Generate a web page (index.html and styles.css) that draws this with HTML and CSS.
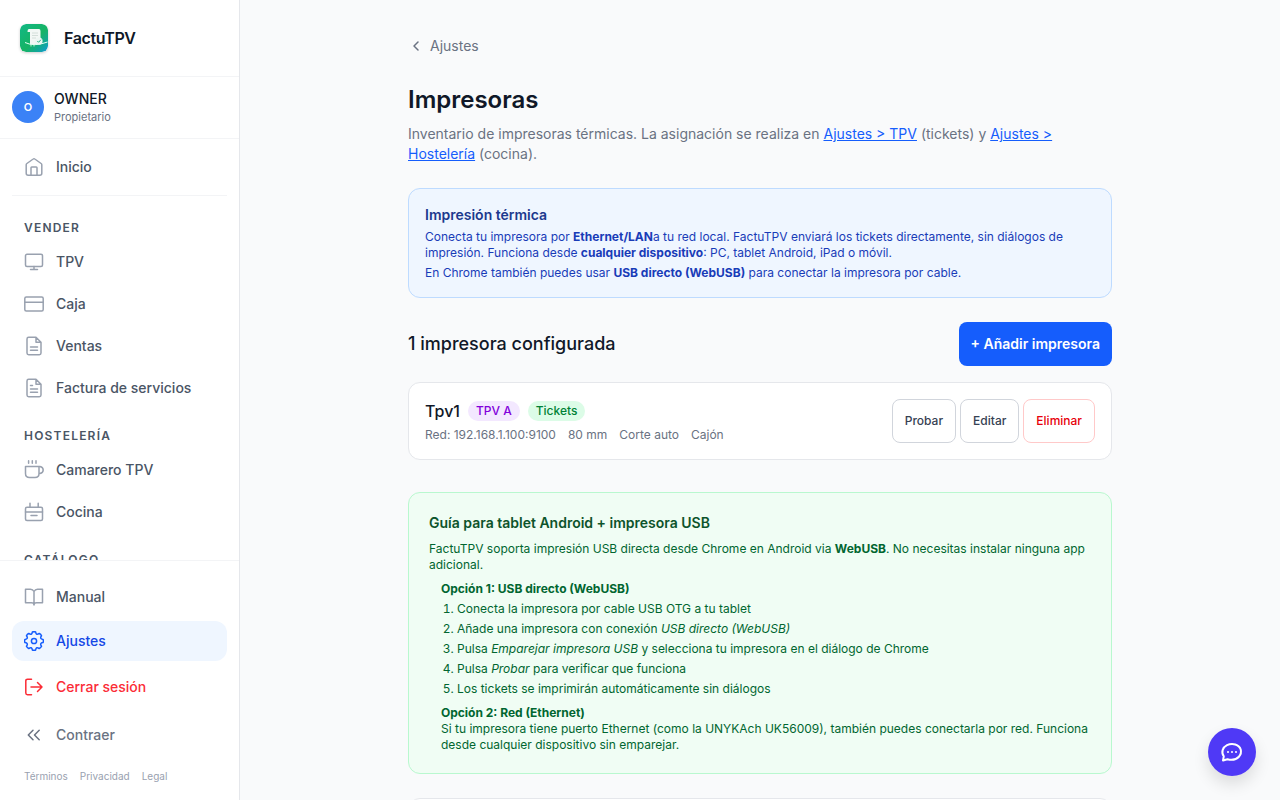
FILE: index.html
```html
<!DOCTYPE html>
<html lang="es">
<head>
  <meta charset="UTF-8">
  <meta name="viewport" content="width=device-width, initial-scale=1.0">
  <title>Impresoras - FactuTPV</title>
  <link rel="stylesheet" href="styles.css">
</head>
<body>
  <!-- Sidebar -->
  <aside class="sidebar">
    <div class="brand">
      <svg class="brand-logo" viewBox="0 0 28 28" aria-hidden="true">
        <defs>
          <linearGradient id="logoBg" x1="0" y1="0" x2="1" y2="1">
            <stop offset="0" stop-color="#12b886"/>
            <stop offset="0.55" stop-color="#16b364"/>
            <stop offset="0.8" stop-color="#12a79a"/>
            <stop offset="1" stop-color="#1199dd"/>
          </linearGradient>
        </defs>
        <rect width="28" height="28" rx="6" fill="url(#logoBg)"/>
        <path d="M9 5h10q1.500 0 1.500 2v13.500H10V8H7.500q0-3 1.500-3z" fill="#f3f7f5"/>
        <path d="M12 9h6M12 11.500h6M12 14h4" stroke="#d3ded9" stroke-width="1"/>
        <path d="M5 18.500q9 4.500 22.500-.5" fill="none" stroke="#e6fff4" stroke-width="1"/>
        <path d="M11 21v1.500M14 21v1.500" stroke="#bff0d8" stroke-width="1"/>
        <circle cx="19" cy="17" r="3.600" fill="#edf5f2"/>
        <path d="M17.300 17l1.300 1.300 2.300-2.600" fill="none" stroke="#27b486" stroke-width="1"/>
      </svg>
      <span class="brand-name">FactuTPV</span>
    </div>

    <div class="user">
      <span class="avatar">O</span>
      <div>
        <div class="user-name">OWNER</div>
        <div class="user-role">Propietario</div>
      </div>
    </div>

    <nav class="nav">
      <a href="#" class="nav-item">
        <svg class="icon" viewBox="0 0 20 20"><path d="M2.200 7.800Q2.200 7 2.900 6.500L9.200 2Q10 1.400 10.800 2L17.100 6.500Q17.800 7 17.800 7.800V16.300Q17.800 18.300 15.800 18.300H4.200Q2.200 18.300 2.200 16.300ZM7 18.300V10.800Q7 10 7.800 10H12.200Q13 10 13 10.800V18.300"/></svg>
        Inicio
      </a>
      <div class="nav-divider"></div>

      <h2 class="nav-label">Vender</h2>
      <a href="#" class="nav-item">
        <svg class="icon" viewBox="0 0 20 20"><rect x="1.500" y="2.300" width="17" height="12.200" rx="1.500"/><path d="M10 14.500V17.500M6.500 17.500h7"/></svg>
        TPV
      </a>
      <a href="#" class="nav-item">
        <svg class="icon" viewBox="0 0 20 20"><rect x="0.800" y="3" width="18.400" height="14" rx="1.500"/><path d="M0.800 8.300h18.400"/></svg>
        Caja
      </a>
      <a href="#" class="nav-item">
        <svg class="icon" viewBox="0 0 20 20"><path d="M12 1.300H4.700Q3 1.300 3 3V17Q3 18.700 4.700 18.700H15.300Q17 18.700 17 17V6.300ZM12 1.300V6.300H17M6.500 11h7M6.500 14.300h7"/></svg>
        Ventas
      </a>
      <a href="#" class="nav-item">
        <svg class="icon" viewBox="0 0 20 20"><path d="M12 1.300H4.700Q3 1.300 3 3V17Q3 18.700 4.700 18.700H15.300Q17 18.700 17 17V6.300ZM12 1.300V6.300H17M6.500 7.500h2M6.500 11h7M6.500 14.300h7"/></svg>
        Factura de servicios
      </a>

      <h2 class="nav-label">Hostelería</h2>
      <a href="#" class="nav-item">
        <svg class="icon" viewBox="0 0 20 20"><path d="M1.500 6.500H15V13.500Q15 17.500 11 17.500H5.500Q1.500 17.500 1.500 13.500ZM15 6.500h1q3.200.6 3.200 3.500t-3.200 3.500h-1M4.600.8v2.500M8.300.8v2.500M12 .8v2.500"/></svg>
        Camarero TPV
      </a>
      <a href="#" class="nav-item">
        <svg class="icon" viewBox="0 0 20 20"><rect x="1.500" y="5.200" width="17" height="13.300" rx="1.500"/><path d="M1.500 10h17M7 13.500h6M6 1.200v4M14.200 1.200v4"/></svg>
        Cocina
      </a>

      <h2 class="nav-label">Catálogo</h2>
    </nav>

    <div class="sidebar-footer">
      <a href="#" class="nav-item">
        <svg class="icon" viewBox="0 0 20 20"><path d="M10 4.500Q8.800 2.300 6.500 2.300H1.500V15.800H7.500Q10 15.800 10 18ZM10 4.500Q11.200 2.300 13.500 2.300H18.500V15.800H12.500Q10 15.800 10 18"/></svg>
        Manual
      </a>
      <a href="#" class="nav-item active">
        <svg class="icon" viewBox="0 0 20 20"><path d="M8.400.95Q10 .3 11.600.95Q12.170 4.750 15.280 2.460Q16.860 3.140 17.540 4.720Q15.250 7.830 19.050 8.400Q19.700 10 19.050 11.600Q15.250 12.170 17.540 15.280Q16.860 16.860 15.280 17.540Q12.170 15.250 11.600 19.050Q10 19.700 8.400 19.050Q7.830 15.250 4.720 17.540Q3.140 16.860 2.460 15.280Q4.750 12.170.95 11.600Q.3 10 .95 8.400Q4.750 7.830 2.460 4.720Q3.140 3.140 4.720 2.460Q7.830 4.750 8.400.95Z"/><circle cx="10" cy="10" r="2.600"/></svg>
        Ajustes
      </a>
      <button type="button" class="nav-item nav-button logout">
        <svg class="icon" viewBox="0 0 20 20"><path d="M7.500 2.200H3.500Q1.800 2.200 1.800 3.900V16.100Q1.800 17.800 3.500 17.800H7.500M7 10H18M13.500 5.500L18 10l-4.500 4.500"/></svg>
        Cerrar sesión
      </button>
      <button type="button" class="nav-item nav-button collapse">
        <svg class="icon" viewBox="0 0 20 20"><path d="M9 5.300L4.300 10 9 14.700M15.200 5.300L10.500 10l4.700 4.700"/></svg>
        Contraer
      </button>
      <div class="legal">
        <a href="#">Términos</a>
        <a href="#">Privacidad</a>
        <a href="#">Legal</a>
      </div>
    </div>
  </aside>

  <!-- Content -->
  <main class="content">
    <div class="page">
      <a href="#" class="back-link">
        <svg class="icon-small" viewBox="0 0 16 16"><path d="M10 4L6 8l4 4"/></svg>
        Ajustes
      </a>

      <h1>Impresoras</h1>
      <p class="intro">Inventario de impresoras térmicas. La asignación se realiza en <a href="#">Ajustes &gt; TPV</a> (tickets) y <a href="#">Ajustes &gt; Hostelería</a> (cocina).</p>

      <section class="info-box">
        <h3>Impresión térmica</h3>
        <p>Conecta tu impresora por <strong>Ethernet/LAN</strong>a tu red local. FactuTPV enviará los tickets directamente, sin diálogos de impresión. Funciona desde <strong>cualquier dispositivo</strong>: PC, tablet Android, iPad o móvil.</p>
        <p>En Chrome también puedes usar <strong>USB directo (WebUSB)</strong> para conectar la impresora por cable.</p>
      </section>

      <div class="list-header">
        <h2>1 impresora configurada</h2>
        <button type="button" class="btn-primary">+ Añadir impresora</button>
      </div>

      <article class="card printer">
        <div class="printer-info">
          <div class="printer-title">
            <h3>Tpv1</h3>
            <span class="badge badge-purple">TPV A</span>
            <span class="badge badge-green">Tickets</span>
          </div>
          <div class="printer-meta">
            <span>Red: 192.168.1.100:9100</span>
            <span>80 mm</span>
            <span>Corte auto</span>
            <span>Cajón</span>
          </div>
        </div>
        <div class="printer-actions">
          <button type="button" class="btn">Probar</button>
          <button type="button" class="btn">Editar</button>
          <button type="button" class="btn btn-danger">Eliminar</button>
        </div>
      </article>

      <section class="guide">
        <h3>Guía para tablet Android + impresora USB</h3>
        <p>FactuTPV soporta impresión USB directa desde Chrome en Android via <strong>WebUSB</strong>. No necesitas instalar ninguna app adicional.</p>
        <div class="guide-option">
          <strong>Opción 1: USB directo (WebUSB)</strong>
          <ol>
            <li>Conecta la impresora por cable USB OTG a tu tablet</li>
            <li>Añade una impresora con conexión <em>USB directo (WebUSB)</em></li>
            <li>Pulsa <em>Emparejar impresora USB</em> y selecciona tu impresora en el diálogo de Chrome</li>
            <li>Pulsa <em>Probar</em> para verificar que funciona</li>
            <li>Los tickets se imprimirán automáticamente sin diálogos</li>
          </ol>
        </div>
        <div class="guide-option">
          <strong>Opción 2: Red (Ethernet)</strong>
          <p>Si tu impresora tiene puerto Ethernet (como la UNYKAch UK56009), también puedes conectarla por red. Funciona desde cualquier dispositivo sin emparejar.</p>
        </div>
      </section>

      <section class="card card-empty"></section>
    </div>
  </main>

  <button type="button" class="chat-button" aria-label="Chat">
    <svg viewBox="0 0 24 24"><path d="M3 20.500L3.800 16.300C.9 12.500 2.600 7.400 7 5.200C12.300 2.500 19.300 4.500 20.700 9.500C22.200 15 17.500 19.800 11.500 19.800Q9.500 19.800 7.500 19.200Z"/><path d="M8 12h.01M12 12h.01M16 12h.01"/></svg>
  </button>
</body>
</html>
```

FILE: styles.css
```css
* {
  box-sizing: border-box;
}

body {
  margin: 0;
  display: flex;
  height: 100vh;
  overflow: hidden;
  background: #f9fafb;
  color: #101828;
  font-family: Inter, "Liberation Sans", sans-serif;
  font-size: 14px;
  line-height: 20px;
}

h1, h2, h3, p, ol {
  margin: 0;
}

button {
  font-family: inherit;
  line-height: 20px;
  cursor: pointer;
}

/* Sidebar */
.sidebar {
  width: 240px;
  flex-shrink: 0;
  display: flex;
  flex-direction: column;
  background: #fff;
  border-right: 1px solid #e5e7eb;
}

.brand {
  display: flex;
  align-items: center;
  gap: 16px;
  padding: 24px 20px;
  border-bottom: 1px solid #f3f4f6;
}

.brand-logo {
  width: 28px;
  height: 28px;
  border-radius: 6px;
  box-shadow: 0 1px 3px rgba(0, 0, 0, 0.2);
}

.brand-name {
  font-size: 16px;
  font-weight: 600;
  letter-spacing: -0.025em;
}

.user {
  display: flex;
  align-items: center;
  gap: 10px;
  padding: 12px 12px 13px;
  border-bottom: 1px solid #f3f4f6;
}

.avatar {
  width: 32px;
  height: 32px;
  display: flex;
  align-items: center;
  justify-content: center;
  border-radius: 50%;
  background: #3b82f6;
  color: #fff;
  font-size: 11px;
  font-weight: 600;
}

.user-name {
  font-weight: 500;
}

.user-role {
  color: #6a7282;
  font-size: 11px;
  line-height: 16px;
}

.nav {
  flex: 1;
  min-height: 0;
  display: flex;
  flex-direction: column;
  gap: 2px;
  padding: 8px 12px;
  overflow-y: auto;
  scrollbar-width: none;
}

.nav-item {
  flex-shrink: 0;
  display: flex;
  align-items: center;
  gap: 12px;
  height: 40px;
  padding: 0 12px;
  border-radius: 12px;
  color: #4a5565;
  font-size: 14px;
  font-weight: 500;
  text-decoration: none;
}

.nav-item.active {
  background: #eff6ff;
  color: #1447e6;
}

.icon,
.icon-small {
  width: 20px;
  height: 20px;
  flex-shrink: 0;
  fill: none;
  stroke: #99a1af;
  stroke-width: 1.5;
  stroke-linecap: round;
  stroke-linejoin: round;
}

.active .icon {
  stroke: #155dfc;
}

.nav-divider {
  flex-shrink: 0;
  height: 1px;
  margin: 6px 0 0;
  background: #f3f4f6;
}

.nav-label {
  flex-shrink: 0;
  padding: 18px 12px 4px;
  color: #4a5565;
  font-size: 12px;
  line-height: 16px;
  font-weight: 600;
  letter-spacing: 1.2px;
  text-transform: uppercase;
}

.nav-divider + .nav-label {
  padding-top: 22px;
}

.sidebar-footer {
  display: flex;
  flex-direction: column;
  gap: 4px;
  padding: 16px 12px;
  border-top: 1px solid #f3f4f6;
}

.nav-button {
  height: 44px;
  border: 0;
  background: none;
}

.logout {
  color: #fb2c36;
}

.logout .icon {
  stroke: #fb2c36;
}

.collapse {
  color: #6a7282;
}

.collapse .icon {
  stroke: #6a7282;
}

.legal {
  display: flex;
  gap: 12px;
  padding: 8px 12px 0;
  font-size: 10px;
  line-height: 15px;
}

.legal a {
  color: #99a1af;
  text-decoration: none;
}

/* Content */
.content {
  flex: 1;
  overflow-y: auto;
  scrollbar-width: none;
}

.page {
  max-width: 768px;
  margin: 0 auto;
  padding: 24px 32px;
}

.back-link {
  display: inline-flex;
  align-items: center;
  gap: 6px;
  height: 44px;
  margin-bottom: 16px;
  color: #6a7282;
  text-decoration: none;
  vertical-align: top;
}

.icon-small {
  width: 16px;
  height: 16px;
  stroke: #6a7282;
}

h1 {
  font-size: 24px;
  line-height: 32px;
  font-weight: 600;
}

.intro {
  margin-top: 8px;
  color: #6a7282;
}

.intro a {
  color: #155dfc;
}

.info-box,
.guide {
  border: 1px solid;
  border-radius: 12px;
  font-size: 12px;
  line-height: 16px;
}

.info-box h3,
.guide h3 {
  font-size: 14px;
  line-height: 20px;
  font-weight: 600;
}

.info-box {
  margin-top: 24px;
  padding: 16px;
  border-color: #bedbff;
  background: #eff6ff;
  color: #193cb8;
}

.info-box h3 {
  color: #1c398e;
}

.info-box p {
  margin-top: 4px;
}

.list-header {
  display: flex;
  align-items: center;
  justify-content: space-between;
  margin: 24px 0 16px;
}

.list-header h2 {
  font-size: 18px;
  line-height: 28px;
  font-weight: 500;
}

.btn-primary {
  height: 44px;
  padding: 0 12px;
  border: 0;
  border-radius: 8px;
  background: #155dfc;
  color: #fff;
  font-size: 14px;
  font-weight: 600;
}

.card {
  padding: 16px;
  border: 1px solid #e5e7eb;
  border-radius: 12px;
  background: #fff;
}

.printer {
  display: flex;
  align-items: center;
  justify-content: space-between;
}

.printer-title {
  display: flex;
  align-items: center;
  gap: 8px;
}

.printer-title h3 {
  font-size: 16px;
  line-height: 24px;
  font-weight: 500;
}

.badge {
  padding: 2px 8px;
  border-radius: 10px;
  font-size: 12px;
  line-height: 16px;
  font-weight: 500;
}

.badge-purple {
  background: #f3e8ff;
  color: #8200db;
}

.badge-green {
  background: #dcfce7;
  color: #008236;
}

.printer-meta {
  display: flex;
  gap: 12px;
  margin-top: 4px;
  color: #6a7282;
  font-size: 12px;
  line-height: 16px;
}

.printer-actions {
  display: flex;
  gap: 4px;
}

.btn {
  height: 44px;
  padding: 0 12px;
  border: 1px solid #d1d5dc;
  border-radius: 8px;
  background: #fff;
  color: #364153;
  font-size: 12px;
  line-height: 16px;
  font-weight: 500;
}

.btn-danger {
  border-color: #ffc9c9;
  color: #e7000b;
}

.guide {
  margin-top: 32px;
  padding: 20px;
  border-color: #b9f8cf;
  background: #f0fdf4;
  color: #016630;
}

.guide h3 {
  margin-bottom: 8px;
  color: #0d542b;
}

.guide-option {
  margin-top: 8px;
  padding-left: 12px;
}

.guide-option ol {
  padding-left: 16px;
}

.guide-option li {
  margin-top: 4px;
}

.card-empty {
  height: 120px;
  margin-top: 24px;
}

/* Chat */
.chat-button {
  position: fixed;
  right: 24px;
  bottom: 24px;
  width: 48px;
  height: 48px;
  display: flex;
  align-items: center;
  justify-content: center;
  padding: 0;
  border: 0;
  border-radius: 50%;
  background: #4f39f6;
  box-shadow: 0 8px 16px rgba(0, 0, 0, 0.12);
}

.chat-button svg {
  width: 24px;
  height: 24px;
  fill: none;
  stroke: #fff;
  stroke-width: 2;
  stroke-linecap: round;
  stroke-linejoin: round;
}
```
